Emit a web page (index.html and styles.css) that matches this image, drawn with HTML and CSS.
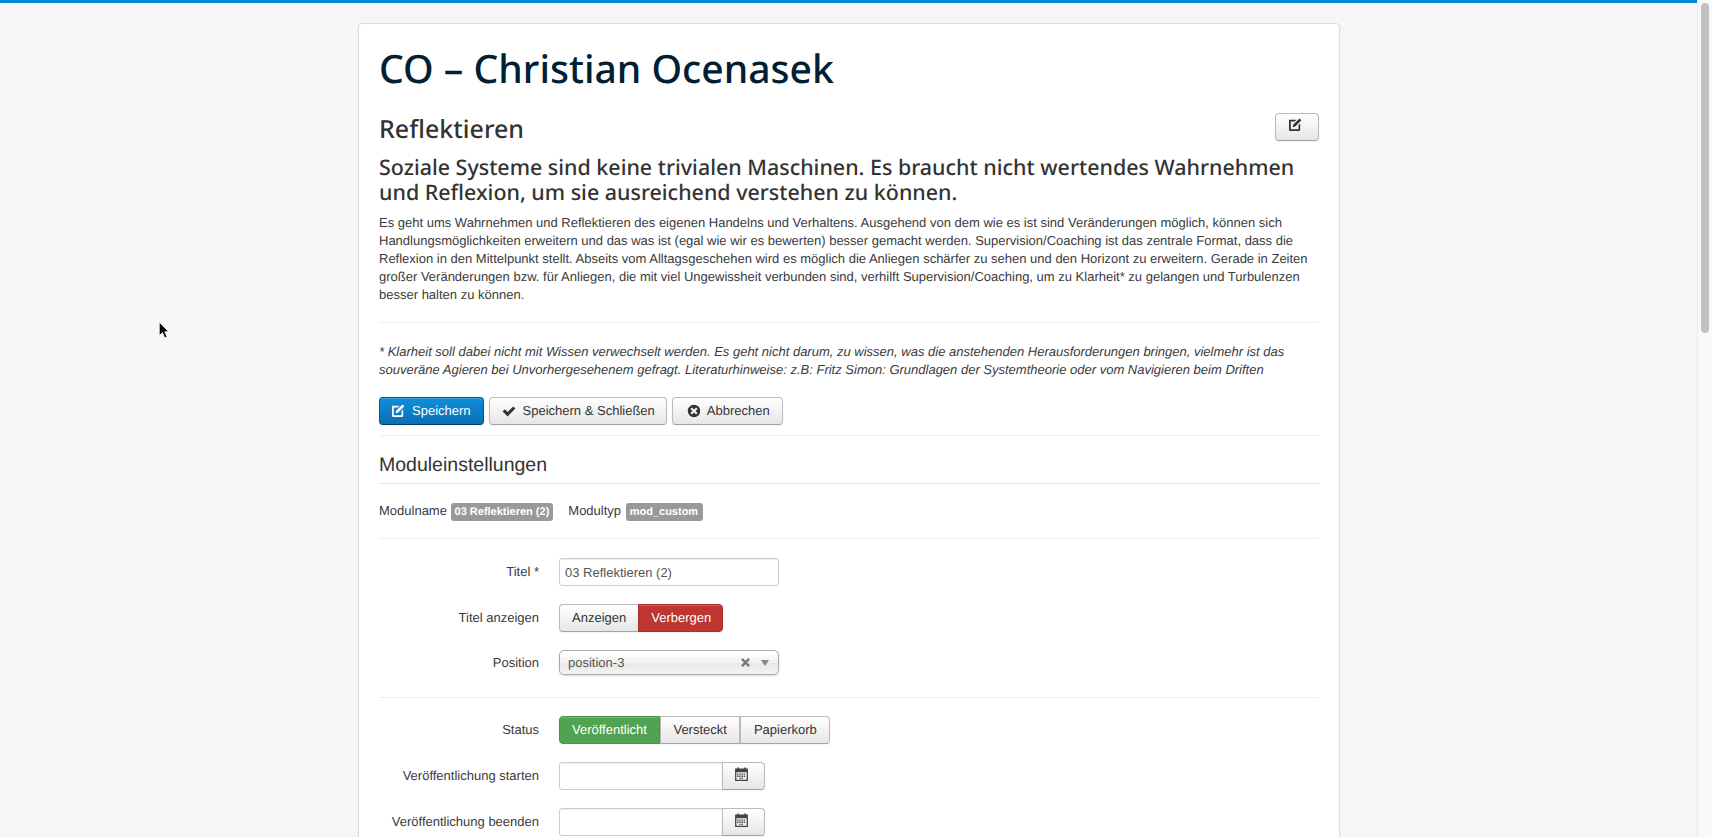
FILE: index.html
```html
<!DOCTYPE html>
<html lang="de">
<head>
	<meta charset="UTF-8">
	<title>CO – Christian Ocenasek</title>
	<link rel="stylesheet" href="styles.css">
</head>
<body>
<div class="topbar"></div>
<div class="wrap">
  <div class="card">
    <h1 class="site-title">CO – Christian Ocenasek</h1>

    <div class="module-head">
      <h2>Reflektieren</h2>
      <a class="btn btn-edit" href="#"><svg class="ico" viewBox="0 0 14 14"><use href="#i-edit"/></svg></a>
    </div>

    <h3 class="lead">Soziale Systeme sind keine trivialen Maschinen. Es braucht nicht wertendes Wahrnehmen und Reflexion, um sie ausreichend verstehen zu können.</h3>
    <p>Es geht ums Wahrnehmen und Reflektieren des eigenen Handelns und Verhaltens. Ausgehend von dem wie es ist sind Veränderungen möglich, können sich Handlungsmöglichkeiten erweitern und das was ist (egal wie wir es bewerten) besser gemacht werden. Supervision/Coaching ist das zentrale Format, dass die Reflexion in den Mittelpunkt stellt. Abseits vom Alltagsgeschehen wird es möglich die Anliegen schärfer zu sehen und den Horizont zu erweitern. Gerade in Zeiten großer Veränderungen bzw. für Anliegen, die mit viel Ungewissheit verbunden sind, verhilft Supervision/Coaching, um zu Klarheit* zu gelangen und Turbulenzen besser halten zu können.</p>
    <hr class="rule-text">
    <p class="note">* Klarheit soll dabei nicht mit Wissen verwechselt werden. Es geht nicht darum, zu wissen, was die anstehenden Herausforderungen bringen, vielmehr ist das souveräne Agieren bei Unvorhergesehenem gefragt. Literaturhinweise: z.B: Fritz Simon: Grundlagen der Systemtheorie oder vom Navigieren beim Driften</p>

    <div class="toolbar">
      <a class="btn btn-primary" href="#"><svg class="ico" viewBox="0 0 14 14"><use href="#i-edit"/></svg>Speichern</a>
      <a class="btn btn-close" href="#"><svg class="ico" viewBox="0 0 14 14"><path d="M.6 7.400l2.200-2.200 2.800 2.800L11.200 2.400l2.200 2.200-7.800 7.800z"/></svg>Speichern &amp; Schließen</a>
      <a class="btn btn-cancel" href="#"><svg class="ico" viewBox="0 0 14 14"><path fill-rule="evenodd" d="M8 .8a6.200 6.200 0 1 0 0 12.400A6.200 6.200 0 0 0 8 .8zM5.900 3.400L8 5.500l2.100-2.100 1.500 1.500L9.500 7l2.100 2.100-1.500 1.500L8 8.500l-2.100 2.100-1.500-1.500L6.500 7 4.400 4.900z"/></svg>Abbrechen</a>
    </div>
    <hr class="rule-tools">

    <h4 class="legend">Moduleinstellungen</h4>
    <div class="module-meta">
      <span>Modulname <span class="label">03 Reflektieren (2)</span></span>
      <span>Modultyp <span class="label label-type">mod_custom</span></span>
    </div>
    <hr class="rule-meta">

    <div class="row">
      <label>Titel *</label>
      <input class="field" type="text" value="03 Reflektieren (2)">
    </div>
    <div class="row">
      <label>Titel anzeigen</label>
      <div class="btn-group">
        <a class="btn" href="#">Anzeigen</a>
        <a class="btn btn-danger" href="#">Verbergen</a>
      </div>
    </div>
    <div class="row row-select">
      <label>Position</label>
      <div class="select">
        <span class="select-text">position-3</span>
        <svg class="select-x" viewBox="0 0 10 10"><path d="M1 2.500L2.500 1 5 3.500 7.500 1 9 2.500 6.500 5 9 7.500 7.500 9 5 6.500 2.500 9 1 7.500 3.500 5z"/></svg>
        <span class="select-arrow"></span>
      </div>
    </div>
    <hr class="rule-form">

    <div class="row">
      <label>Status</label>
      <div class="btn-group btn-group-status">
        <a class="btn btn-success" href="#">Veröffentlicht</a>
        <a class="btn" href="#">Versteckt</a>
        <a class="btn" href="#">Papierkorb</a>
      </div>
    </div>
    <div class="row">
      <label>Veröffentlichung starten</label>
      <div class="date">
        <input class="field" type="text">
        <a class="btn" href="#"><svg class="ico-cal" viewBox="0 0 14 14"><use href="#i-cal"/></svg></a>
      </div>
    </div>
    <div class="row">
      <label>Veröffentlichung beenden</label>
      <div class="date">
        <input class="field" type="text">
        <a class="btn" href="#"><svg class="ico-cal" viewBox="0 0 14 14"><use href="#i-cal"/></svg></a>
      </div>
    </div>
  </div>
</div>

<!-- fake scrollbar and mouse pointer from the screenshot -->
<div class="scrollbar"><div class="thumb"></div></div>
<svg class="pointer" viewBox="0 0 12 18"><path d="M1 1v13l3-3 2.200 5 2.300-1-2.200-4.800H10z" fill="#000" stroke="#fff" stroke-width=".8"/></svg>

<svg class="defs" width="0" height="0">
  <symbol id="i-edit" viewBox="0 0 14 14">
    <path fill-rule="evenodd" d="M1 1.800h7.500L6.800 3.500H2.800v7.700h7.700V7.300L12.200 5.600V11.700a1.300 1.300 0 0 1-1.300 1.200H2.300A1.300 1.300 0 0 1 1 11.700z"/>
    <path d="M11.500.4l1.900 1.900-6.200 6.200-2.600.7.700-2.600z"/>
  </symbol>
  <symbol id="i-cal" viewBox="0 0 14 14">
    <path fill-rule="evenodd" d="M1 1.500h2V.5h1.500v1h5v-1H11v1h2V13H1zM2.200 5v6.800h9.600V5z"/>
    <path d="M3 6h1.300v1.300H3zM5 6h1.300v1.300H5zM7 6h1.300v1.300H7zM9 6h1.300v1.300H9zM3 8h1.300v1.300H3zM5 8h1.300v1.300H5zM7 8h1.300v1.300H7zM9 8h1.300v1.300H9zM5 10h1.300v1.300H5zM7 10h1.300v1.300H7z"/>
  </symbol>
</svg>
</body>
</html>
```

FILE: styles.css
```css
html{overflow:hidden;height:100%;}
body{
margin:0;height:100%;overflow:hidden;
background:#f4f6f7;color:#3a3a3a;
font-family:"Liberation Sans",Arial,sans-serif;font-size:13px;line-height:18px;
text-rendering:geometricPrecision;
}
.topbar{height:3px;background:#0088cc;margin-right:15px;}
.wrap{width:982px;margin:20px 0 0 358px;}
/* card */
.card{
background:#fff;border:1px solid #dcdcdc;border-radius:4px;
box-shadow:0 1px 2px rgba(0,0,0,.08);
padding:22px 20px 40px;height:1900px;
}
h1,h2,h3,h4{font-family:"Noto Sans",sans-serif;font-weight:500;margin:0;}
.site-title{font-size:39.1px;line-height:46px;color:#012033;}
.module-head{display:flex;justify-content:space-between;align-items:flex-start;margin-top:16px;}
.module-head h2{font-size:25px;line-height:42px;color:#333;}
.lead{font-size:21.45px;line-height:25px;color:#333;margin-top:5px;}
p{margin:0;}
.lead+p{margin-top:9px;}
.note{font-style:italic;}
hr{border:0;border-top:1px solid #eee;margin:0;}
.rule-text{margin:18px 0 20px;}
/* buttons */
.btn{
display:inline-flex;align-items:center;height:28px;box-sizing:border-box;padding:0 12px;
color:#333;text-decoration:none;
background:linear-gradient(#fff,#e6e6e6);
border:1px solid #bbb;border-bottom-color:#a2a2a2;border-radius:4px;
box-shadow:inset 0 1px 0 rgba(255,255,255,.2),0 1px 2px rgba(0,0,0,.05);
}
.ico{width:14px;height:14px;fill:currentColor;margin-right:7px;}
.btn-edit{width:44px;padding:0 0 0 12px;margin-top:5px;}
.btn-edit .ico{margin:0 0 4px;}
.btn-primary{padding-left:11px;background:linear-gradient(#0f8fdb,#0a6fb4);border-color:#07558c #07558c #05406a;color:#fff;}
.btn-close{padding-right:11px;}
.btn-cancel{padding-left:13px;}
.btn-danger{padding-right:11px;background:#bd362f;border-color:#a9302a;color:#fff;}
.btn-success{background:#51a351;border-color:#499249;color:#fff;}
.toolbar{display:flex;gap:5px;margin-top:18px;}
.rule-tools{margin-top:10px;}
/* module settings */
.legend{font-family:"Liberation Sans",sans-serif;font-weight:400;font-size:19.5px;line-height:24px;color:#333;padding:17px 0 6px;border-bottom:1px solid #e5e5e5;}
.module-meta{display:flex;gap:15px;margin-top:18px;}
.label{
display:inline-block;background:#999;color:#fff;border-radius:3px;
font-size:11px;font-weight:700;line-height:14px;padding:2px 4px;vertical-align:baseline;
}
.label-type{margin-left:1px;padding-right:5px;}
.rule-meta{margin:17px 0 19px;}
/* form */
.row{display:flex;align-items:center;gap:20px;height:28px;margin-bottom:18px;}
.row label{width:160px;text-align:right;}
.row-select{height:25px;margin-bottom:22px;}
.field{
box-sizing:border-box;width:220px;height:28px;padding:4px 5px;margin:0;
font:13px/18px "Liberation Sans",sans-serif;color:#555;background:#fff;
border:1px solid #ccc;border-radius:3px;box-shadow:inset 0 1px 1px rgba(0,0,0,.075);
}
.btn-group{display:flex;}
.btn-group .btn{border-radius:0;margin-left:-1px;}
.btn-group .btn:first-child{border-radius:4px 0 0 4px;margin-left:0;}
.btn-group .btn:last-child{border-radius:0 4px 4px 0;}
.btn-group-status .btn{margin-left:0;}
.btn-group-status .btn+.btn{padding:0 12.500px;}
.select{
box-sizing:border-box;width:220px;height:25px;display:flex;align-items:center;padding:0 9px 0 8px;
background:linear-gradient(#fff 10%,#f0f0f0 50%,#e8e8e8 55%,#f4f4f4);
border:1px solid #aaa;border-radius:5px;box-shadow:0 1px 2px rgba(0,0,0,.15);color:#555;
}
.select-text{flex:1;}
.select-x{width:11px;height:11px;fill:#777;margin-right:10px;}
.select-arrow{width:0;height:0;border:4px solid transparent;border-top:6px solid #888;border-bottom:0;}
.rule-form{margin-bottom:18px;}
.date{display:flex;}
.date .field{width:164px;border-radius:3px 0 0 3px;}
.date .btn{width:43px;margin-left:-1px;justify-content:flex-start;border-radius:0 4px 4px 0;padding:0 0 0 11px;}
.ico-cal{width:15px;height:15px;fill:#444;margin-bottom:3px;}
/* overlays */
.scrollbar{position:fixed;top:0;right:0;width:15px;height:100%;background:#f9f9f9;border-left:1px solid #e8e8e8;box-sizing:border-box;}
.thumb{position:absolute;left:3px;top:3px;width:8px;height:330px;border-radius:4px;background:#c1c1c1;}
.pointer{position:fixed;left:158px;top:321px;width:13px;height:19px;}
.defs{position:absolute;}
```
